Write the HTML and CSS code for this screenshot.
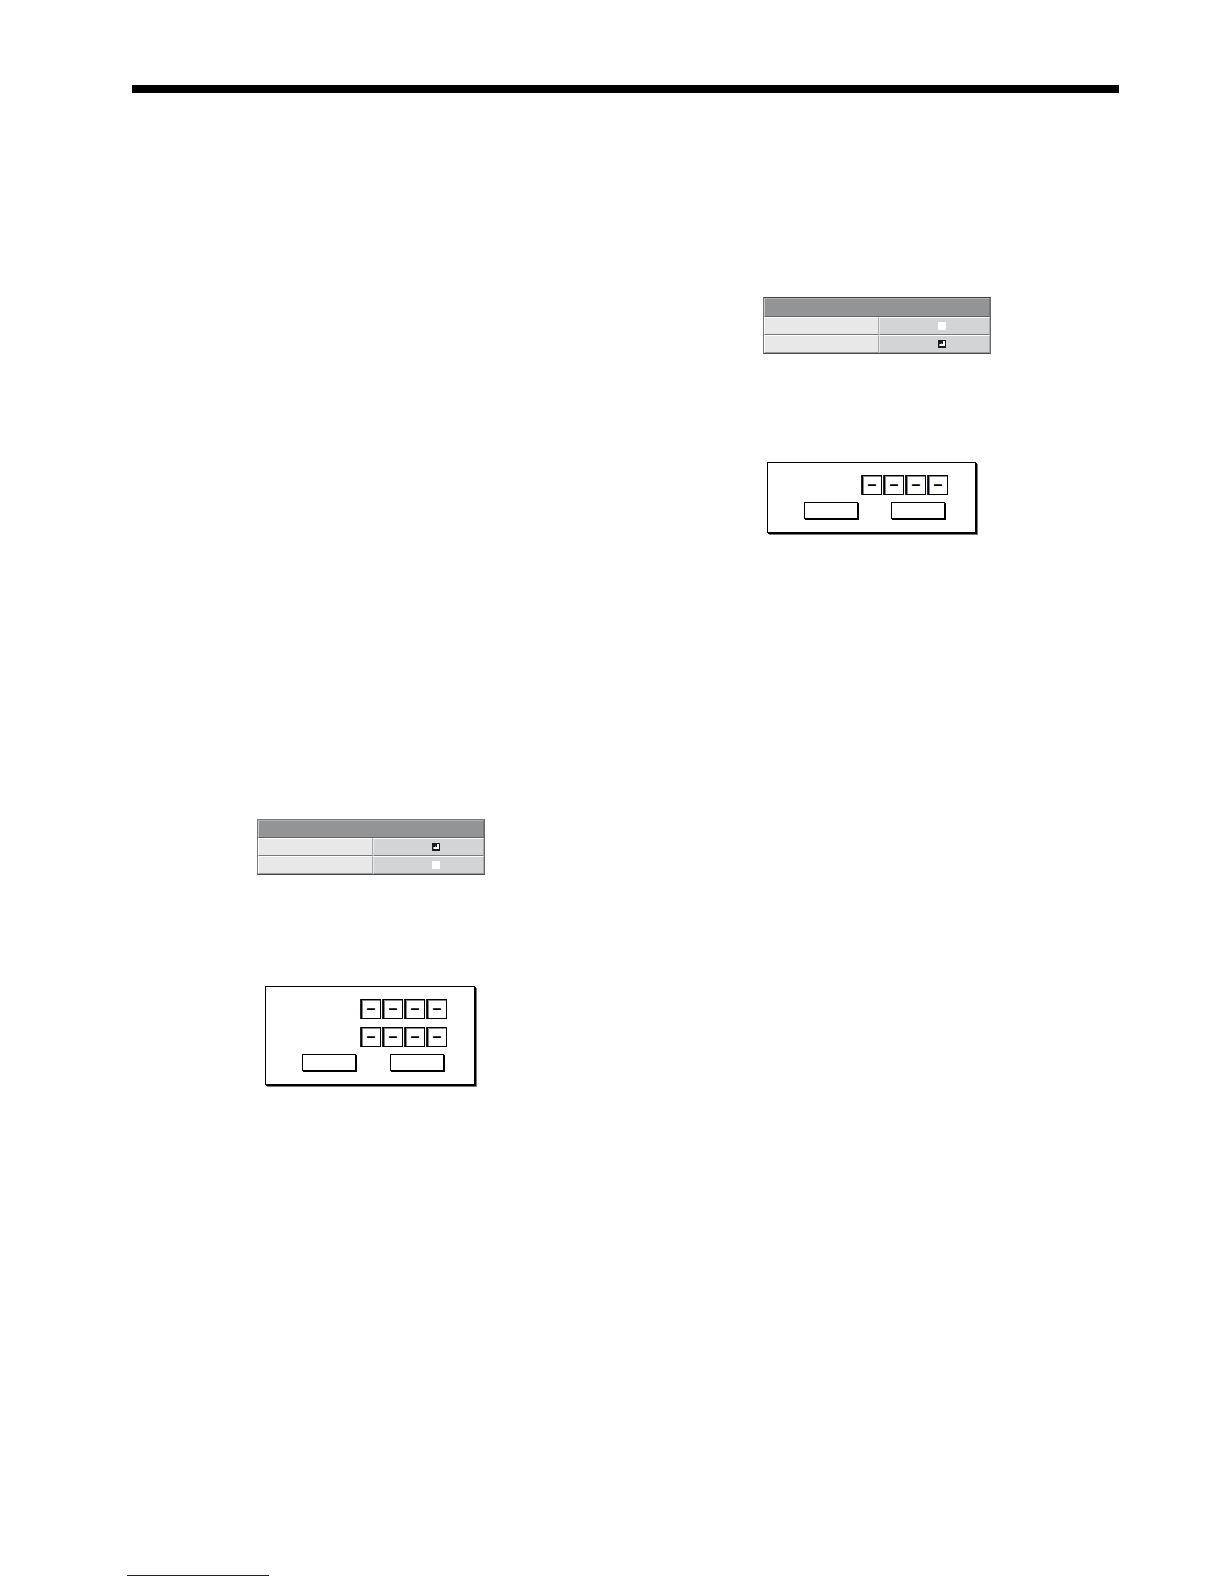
FILE: index.html
```
<!DOCTYPE html>
<html lang="en">
<head>
    <meta charset="UTF-8">
    <meta name="viewport" content="width=device-width, initial-scale=1.0">
    <title>Password Settings</title>
    <link rel="stylesheet" href="styles.css">
</head>
<body>
    <hr class="rule">
    <main class="columns">
        <section class="column column-left">
            <table class="menu" aria-label="Password function">
                <colgroup>
                    <col class="name-col">
                    <col>
                </colgroup>
                <thead>
                    <tr><th colspan="2"></th></tr>
                </thead>
                <tbody>
                    <tr>
                        <td class="name"></td>
                        <td class="value"><input type="checkbox" class="check" aria-label="On" checked></td>
                    </tr>
                    <tr>
                        <td class="name"></td>
                        <td class="value"><input type="checkbox" class="check" aria-label="Off"></td>
                    </tr>
                </tbody>
            </table>
            <form class="dialog">
                <div class="digits">
                    <input type="text" value="–" aria-label="Password digit 1">
                    <input type="text" value="–" aria-label="Password digit 2">
                    <input type="text" value="–" aria-label="Password digit 3">
                    <input type="text" value="–" aria-label="Password digit 4">
                </div>
                <div class="digits">
                    <input type="text" value="–" aria-label="Confirm digit 1">
                    <input type="text" value="–" aria-label="Confirm digit 2">
                    <input type="text" value="–" aria-label="Confirm digit 3">
                    <input type="text" value="–" aria-label="Confirm digit 4">
                </div>
                <div class="buttons">
                    <button type="button" aria-label="OK"></button>
                    <button type="button" aria-label="Cancel"></button>
                </div>
            </form>
        </section>
        <section class="column column-right">
            <table class="menu" aria-label="Password function">
                <colgroup>
                    <col class="name-col">
                    <col>
                </colgroup>
                <thead>
                    <tr><th colspan="2"></th></tr>
                </thead>
                <tbody>
                    <tr>
                        <td class="name"></td>
                        <td class="value"><input type="checkbox" class="check" aria-label="On"></td>
                    </tr>
                    <tr>
                        <td class="name"></td>
                        <td class="value"><input type="checkbox" class="check" aria-label="Off" checked></td>
                    </tr>
                </tbody>
            </table>
            <form class="dialog">
                <div class="digits">
                    <input type="text" value="–" aria-label="Password digit 1">
                    <input type="text" value="–" aria-label="Password digit 2">
                    <input type="text" value="–" aria-label="Password digit 3">
                    <input type="text" value="–" aria-label="Password digit 4">
                </div>
                <div class="buttons">
                    <button type="button" aria-label="OK"></button>
                    <button type="button" aria-label="Cancel"></button>
                </div>
            </form>
        </section>
    </main>
    <footer class="footer">
        <a href="#" class="footer-link" aria-label="Contents"></a>
    </footer>
</body>
</html>
```

FILE: styles.css
```
* {
    margin: 0;
    padding: 0;
    box-sizing: border-box;
    font-family: "Liberation Sans", Arial, sans-serif;
}

body {
    background: white;
    min-height: 100vh;
    display: flex;
    flex-direction: column;
    padding: 85px 105px 8px 132px;
}

.rule {
    height: 8px;
    border: none;
    background: black;
}

.columns {
    display: grid;
    grid-template-columns: 1fr 1fr;
    gap: 13px;
}

.column {
    display: flex;
    flex-direction: column;
    align-items: flex-start;
}

.column-left {
    padding: 726px 0 0 125px;
    gap: 111px;
}

.column-right {
    padding: 204px 0 0 131px;
    gap: 108px;
}

/* settings table */
.menu {
    width: 228px;
    table-layout: fixed;
    border-collapse: separate;
    border-spacing: 0;
    border: 1px solid #77787a;
    border-right-color: #6a6b6d;
    border-bottom-color: #4c4c4e;
}

.name-col {
    width: 115px;
}

.menu th {
    height: 18px;
    background: #929496;
    border-top: 1px solid #b4b5b7;
    border-left: 1px solid #c8c9cb;
    border-right: 1px solid #77787a;
    border-bottom: 1px solid #636466;
}

.menu td {
    height: 18px;
    border-top: 1px solid white;
    border-left: 1px solid white;
    border-bottom: 1px solid #77787a;
    line-height: 0;
}

.menu tr:last-child td {
    border-bottom-color: #99999b;
}

.column-right .menu {
    border-top-color: #414143;
}

.column-right .menu th {
    height: 19px;
}

.menu .name {
    background: #e8e8e9;
    border-right: 1px solid #aaabad;
}

.menu .value {
    background: #d2d4d5;
    padding-left: 58px;
    border-left-color: #e7e8e9;
    border-right: 1px solid #a8a9ab;
}

.check {
    appearance: none;
    width: 8px;
    height: 8px;
    background: white;
    vertical-align: middle;
}

/* black box with a white corner arrow */
.check:checked {
    background:
        linear-gradient(white, white) 5px 1px / 2px 5px no-repeat,
        linear-gradient(white, white) 2px 4px / 3px 2px no-repeat,
        linear-gradient(#999, #999) 1px 4px / 1px 2px no-repeat,
        linear-gradient(#777, #777) 3px 3px / 1px 1px no-repeat,
        #1b1b1d;
}

/* password dialog */
.dialog {
    width: 209px;
    display: flex;
    flex-direction: column;
    gap: 7px;
    padding: 12px 27px 13px 36px;
    border: 1px solid black;
    box-shadow: 1px 1px 0 black, 2px 2px 0 #777;
}

.column-left .dialog {
    width: 210px;
    margin-left: 8px;
}

.column-right .dialog {
    margin-left: 4px;
}

.digits {
    display: flex;
    justify-content: flex-end;
    gap: 2px;
}

.digits + .digits {
    margin-top: 1px;
}

.digits input {
    width: 20px;
    height: 20px;
    border: 1px solid black;
    box-shadow: inset 1px 1px 0 #888, -1px 0 0 #222;
    font-size: 16px;
    font-weight: bold;
    line-height: 18px;
    text-align: center;
}

.buttons {
    display: flex;
    justify-content: space-between;
    padding-right: 3px;
}

.buttons button {
    width: 54px;
    height: 17px;
    background: white;
    border: 1px solid black;
    box-shadow: 1px 1px 0 black;
}

.footer {
    margin-top: auto;
    margin-left: -5px;
}

.footer-link {
    display: block;
    width: 142px;
    height: 16px;
    border-bottom: 1px solid #14148c;
}
```
